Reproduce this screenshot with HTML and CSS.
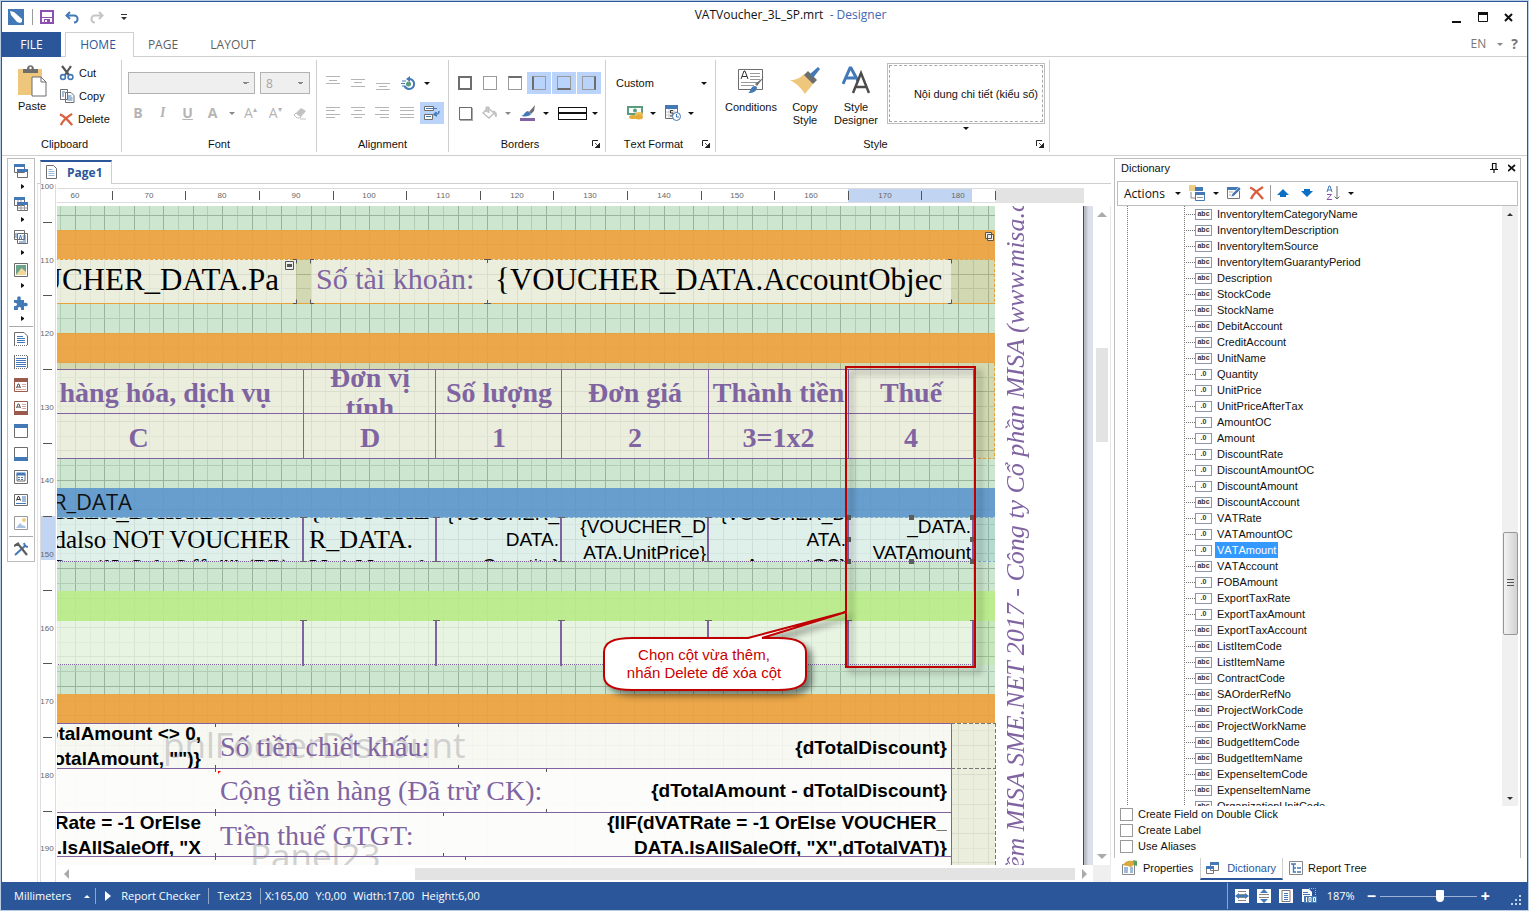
FILE: index.html
```html
<!DOCTYPE html>
<html lang="vi">
<head>
<meta charset="utf-8">
<title>VATVoucher_3L_SP.mrt - Designer</title>
<link rel="stylesheet" href="styles.css">
</head>
<body>
<svg class="defs" aria-hidden="true">
  <symbol id="launch" viewBox="0 0 8 8"><path d="M.5 6V.5H6" fill="none" stroke="#222"/><path d="M8 3v5H3zM3 3l3 3" fill="#222" stroke="#222" stroke-width=".8"/></symbol>
  <symbol id="cross" viewBox="0 0 16 16"><path d="M1 2.500C5 4 10 9 14 14M14 2C9 5 4 9 2 14" fill="none" stroke="#d9603f" stroke-width="2.400"/></symbol>
</svg>
<div class="window">
  <header class="titlebar">
    <div class="quick">
      <svg width="16" height="16" viewBox="0 0 16 16"><rect width="16" height="16" fill="#4379b6"/><path d="M2 2l4 1 8 7v3l-2 1-3-1-6-7z" fill="#fff"/></svg>
      <i class="vsep"></i>
      <button class="plain" aria-label="Save"><svg width="14" height="14" viewBox="0 0 14 14"><path d="M1 1h12v12H1z" fill="#fff" stroke="#8c50b0" stroke-width="2"/><path d="M2 7h10v1H2z" fill="#8c50b0"/><path d="M4 9h6v4H4z" fill="#8c50b0"/><path d="M5 10h2v2H5z" fill="#fff"/></svg></button>
      <button class="plain" aria-label="Undo"><svg width="14" height="13" viewBox="0 0 14 13"><path d="M5 1L1.500 4.500 5 8M2 4.500h7c5 0 4.500 7 0 7" fill="none" stroke="#4379b6" stroke-width="2"/></svg></button>
      <button class="plain" aria-label="Redo"><svg width="14" height="13" viewBox="0 0 14 13"><path d="M9 1l3.500 3.500L9 8M12 4.500H5c-5 0-4.500 7 0 7" fill="none" stroke="#c6c6c6" stroke-width="2"/></svg></button>
      <button class="plain more" aria-label="Customize toolbar"><svg width="6" height="6" viewBox="0 0 6 6"><path d="M0 0h6v1H0zM0 3h6L3 6z" fill="#333"/></svg></button>
    </div>
    <h1>VATVoucher_3L_SP.mrt&nbsp; <span>- Designer</span></h1>
    <div class="winbtns">
      <button class="plain" aria-label="Minimize"><svg width="10" height="11" viewBox="0 0 10 11"><path d="M0 9h9v2H0z" fill="#111"/></svg></button>
      <button class="plain" aria-label="Maximize"><svg width="10" height="10" viewBox="0 0 10 10"><path d="M.5 .5h9v9h-9z" fill="none" stroke="#111"/><path d="M0 0h10v3H0z" fill="#111"/></svg></button>
      <button class="plain" aria-label="Close"><svg width="9" height="9" viewBox="0 0 9 9"><path d="M1 1l7 7M8 1L1 8" stroke="#111" stroke-width="2"/></svg></button>
    </div>
  </header>

  <nav class="tabs">
    <button class="file">FILE</button>
    <button class="tab on">HOME</button>
    <button class="tab">PAGE</button>
    <button class="tab">LAYOUT</button>
    <div class="lang"><button class="plain">EN</button><i class="dd dim"></i><button class="plain help">?</button></div>
  </nav>

  <section class="ribbon">
    <div class="group g-clip">
      <div class="content clip">
        <button class="big"><svg width="30" height="32" viewBox="0 0 30 32"><path d="M1 4h24v26H1z" fill="#eec77d"/><path d="M6 4h4c0-5 7-5 7 0h4v4H6z" fill="#6d6d6d"/><circle cx="13.500" cy="3" r="1.200" fill="#fff"/><path d="M15 12h9l5 5v14H15z" fill="#fff" stroke="#6d6d6d"/><path d="M24 12v5h5" fill="none" stroke="#6d6d6d"/></svg>Paste</button>
        <div class="stack">
          <button class="row"><svg width="16" height="16" viewBox="0 0 16 16"><path d="M3 1l7 9M12 1L6 10" stroke="#555" stroke-width="2.200"/><circle cx="4" cy="12" r="2.400" fill="none" stroke="#4379b6" stroke-width="1.600"/><circle cx="11.500" cy="12" r="2.400" fill="none" stroke="#4379b6" stroke-width="1.600"/></svg>Cut</button>
          <button class="row"><svg width="16" height="16" viewBox="0 0 16 16"><path d="M1.500 1.500h7v10h-7zM6.500 4.500H12l3 3v7H6.500z" fill="#fff" stroke="#6d6d6d"/><path d="M3 4h3M3 6h2M3 8h2M8.500 8h4M8.500 10h5M8.500 12h5" stroke="#4379b6"/></svg>Copy</button>
          <button class="row"><svg width="15" height="15"><use href="#cross"/></svg>Delete</button>
        </div>
      </div>
      <div class="label">Clipboard</div>
    </div>

    <div class="group g-font">
      <div class="content">
        <div class="line combos"><select class="wide" aria-label="Font name" disabled><option></option></select><select class="size" aria-label="Font size" disabled><option>8</option></select></div>
        <div class="line">
          <button class="t b" disabled>B</button><button class="t it" disabled>I</button><button class="t u" disabled>U</button><button class="t b" disabled>A</button><i class="dd dim"></i>
          <button class="t" disabled>A<sup>▴</sup></button><button class="t" disabled>A<sup>▾</sup></button>
          <button class="t" disabled aria-label="Clear format"><svg width="14" height="14" viewBox="0 0 14 14"><path d="M1 9l7-7 5 3-6 7H4z" fill="#c2c2c2"/><path d="M1 9l2-2 5 4-1 1H4z" fill="#fff" stroke="#c2c2c2"/><path d="M7 13h6" stroke="#c2c2c2"/></svg></button>
        </div>
      </div>
      <div class="label">Font</div>
    </div>

    <div class="group g-align">
      <div class="content">
        <div class="line">
          <button class="t" disabled aria-label="Top"><svg width="14" height="14"><path d="M0 .5h14M3 4.500h8M0 7.500h14" stroke="#b5b5b5"/></svg></button>
          <button class="t" disabled aria-label="Middle"><svg width="14" height="14"><path d="M0 3.500h14M3 6.500h8M0 10.500h14" stroke="#b5b5b5"/></svg></button>
          <button class="t" disabled aria-label="Bottom"><svg width="14" height="14"><path d="M0 7.500h14M3 10.500h8M0 13.500h14" stroke="#b5b5b5"/></svg></button>
          <button class="t" aria-label="Rotate"><svg width="15" height="15" viewBox="0 0 15 15"><path d="M7 3c8-1 8 10 1 10-3 0-4-2-4.500-3" fill="none" stroke="#4379b6" stroke-width="2"/><path d="M9 0v6L5 3z" fill="#4379b6"/><circle cx="7.500" cy="8" r="2.500" fill="#5a9c7c"/><path d="M1 5h4M0 7.500h4M1 10h3" stroke="#4379b6"/></svg></button><i class="dd"></i>
        </div>
        <div class="line">
          <button class="t" disabled aria-label="Left"><svg width="14" height="12"><path d="M0 .5h14M0 3.500h9M0 7.500h14M0 10.500h9" stroke="#b5b5b5"/></svg></button>
          <button class="t" disabled aria-label="Center"><svg width="14" height="12"><path d="M0 .5h14M3 3.500h8M0 7.500h14M3 10.500h8" stroke="#b5b5b5"/></svg></button>
          <button class="t" disabled aria-label="Right"><svg width="14" height="12"><path d="M0 .5h14M5 3.500h9M0 7.500h14M5 10.500h9" stroke="#b5b5b5"/></svg></button>
          <button class="t" disabled aria-label="Justify"><svg width="14" height="12"><path d="M0 .5h14M0 3.500h14M0 7.500h14M0 10.500h14" stroke="#b5b5b5"/></svg></button>
          <button class="t sel" aria-label="Word wrap"><svg width="16" height="16" viewBox="0 0 16 16"><path d="M.5 1.500h9v4h-9zM.5 9.500h8v5h-8z" fill="#fff" stroke="#6d6d6d"/><path d="M2 3.500h11M2 11.500h5" stroke="#4379b6"/><path d="M15 6c0 3-1 3-4 3M12.500 7L10 9.500l3 1.500" fill="none" stroke="#4379b6" stroke-width="1.500"/></svg></button>
        </div>
      </div>
      <div class="label">Alignment</div>
    </div>

    <div class="group g-border">
      <div class="content">
        <div class="line">
          <button class="t" aria-label="All borders"><i class="box all"></i></button>
          <button class="t" aria-label="No border"><i class="box"></i></button>
          <button class="t" aria-label="Top border"><i class="box bt"></i></button>
          <button class="t sel" aria-label="Left border"><i class="box bl"></i></button>
          <button class="t sel" aria-label="Bottom border"><i class="box bb"></i></button>
          <button class="t sel" aria-label="Right border"><i class="box br"></i></button>
        </div>
        <div class="line">
          <button class="t" aria-label="Shadow"><i class="box shade"></i></button>
          <button class="t" disabled aria-label="Fill"><svg width="16" height="14" viewBox="0 0 16 14"><path d="M6 2l6 5-5 5-6-5z" fill="#fff" stroke="#bdbdbd" stroke-width="1.300"/><path d="M4 6V1h3v6M11 5c3 0 4 3 3 6-1-2-1-3-3-4" fill="#c8c8c8" stroke="#bdbdbd"/></svg></button><i class="dd dim"></i>
          <button class="t" aria-label="Border color"><svg width="16" height="16" viewBox="0 0 16 16"><path d="M15 0L9 7l2 2 3-3z" fill="#6d6d6d"/><path d="M1 11c3 0 3-4 7-5l3 3c-1 2-5 3-10 2z" fill="#4379b6"/><path d="M0 13h15v3H0z" fill="#8064a2"/></svg></button><i class="dd"></i>
          <button class="stroke" aria-label="Border style"></button><i class="dd"></i>
        </div>
      </div>
      <div class="label">Borders</div><svg class="launch"><use href="#launch"/></svg>
    </div>

    <div class="group g-fmt">
      <div class="content">
        <div class="line custom"><button class="pick"><span>Custom</span><i class="dd"></i></button></div>
        <div class="line fmts">
          <button class="t" aria-label="Currency"><svg width="16" height="16" viewBox="0 0 16 16"><path d="M1 2h14v7H1z" fill="#fff" stroke="#5a9c7c" stroke-width="2"/><circle cx="8" cy="5.500" r="2" fill="#5a9c7c"/><ellipse cx="6" cy="12" rx="4" ry="2" fill="#e5ac3c"/><ellipse cx="12" cy="9" rx="4" ry="2" fill="#edbd5a"/><ellipse cx="12" cy="12" rx="4" ry="2.500" fill="#e5ac3c"/></svg></button><i class="dd"></i>
          <button class="t" aria-label="Date"><svg width="16" height="16" viewBox="0 0 16 16"><path d="M.5 1.500h12v12H.5z" fill="#fff" stroke="#6d6d6d"/><path d="M0 0h13v4H0z" fill="#4379b6"/><path d="M1 7h11M1 10h11M4 4v9M9 4v9" stroke="#ccc"/><path d="M8 5.500H5.500V8H8v3H5" fill="none" stroke="#333"/><circle cx="11.500" cy="11.500" r="4" fill="#fff" stroke="#4379b6"/><path d="M11.500 9v3H14" fill="none" stroke="#4379b6"/></svg></button><i class="dd"></i>
        </div>
      </div>
      <div class="label">Text Format</div><svg class="launch"><use href="#launch"/></svg>
    </div>

    <div class="group g-style">
      <div class="content styles">
        <button class="big"><svg width="28" height="32" viewBox="0 0 28 32"><path d="M1.500 4.500h24v20h-24z" fill="#fff" stroke="#6d6d6d"/><path d="M4 14l3-8h1l3 8M5 11.500h5" fill="none" stroke="#333"/><path d="M13 8.500h10M13 11.500h10M13 14.500h10M4 17.500h18M4 20.500h13" stroke="#999"/><path d="M27 12l-7 9-2-2z" fill="#6d6d6d"/><path d="M11 28c3-1 2-7 7-7l2 1c0 4-3 6-9 6z" fill="#4379b6"/></svg>Conditions</button>
        <button class="big"><svg width="32" height="32" viewBox="0 0 32 32"><path d="M1 15c6 0 10-2 14-6l9 9c-1 3-5 7-8 11-4-6-8-10-15-14z" fill="#eec77d"/><path d="M15 10l4-4 9 9-4 4z" fill="#6d6d6d"/><path d="M21 9l8-7 2 2-7 9z" fill="#4379b6"/></svg>Copy<br>Style</button>
        <button class="big"><svg width="28" height="32" viewBox="0 0 28 32"><path d="M1 19L8 3h1l7 13M4 13h9" fill="none" stroke="#4379b6" stroke-width="3"/><path d="M11 28l8-20 8 20M14 22h10" fill="none" stroke="#4c4c4c" stroke-width="2.500"/></svg>Style<br>Designer</button>
        <div class="gallery"><button class="item"><span>Nội dung chi tiết (kiểu số)</span></button><i class="dd"></i></div>
      </div>
      <div class="label">Style</div><svg class="launch"><use href="#launch"/></svg>
    </div>
  </section>

  <main class="work">
    <aside class="toolbox">
      <button aria-label="Bands"><svg viewBox="0 0 14 14"><path d="M.5 .5h10v8H.5zM3.500 5.500h10v8h-10z" fill="#fff" stroke="#6d6d6d"/><path d="M0 0h11v3H0zM3 5h11v3H3z" fill="#4379b6"/></svg></button><i class="rt"></i>
      <button aria-label="Cross bands"><svg viewBox="0 0 14 14"><path d="M.5 .5h10v8H.5zM3.500 5.500h10v8h-10z" fill="#fff" stroke="#6d6d6d"/><path d="M0 0h11v3H0zM3 5h11v3H3z" fill="#4379b6"/><path d="M3.500 11h10M7 8v5M10.500 8v5M4 3v2M7 3v2" stroke="#999"/></svg></button><i class="rt"></i>
      <button aria-label="Components"><svg viewBox="0 0 14 14"><path d="M.5 .5h10v9H.5zM3.500 3.500h10v10h-10z" fill="#fff" stroke="#6d6d6d"/><path d="M5 10l1.500-5L8 10M2 3v5M8.500 6h3.500M9 8h3M9 10h3M5 12h7" fill="none" stroke="#4379b6"/></svg></button><i class="rt"></i>
      <button aria-label="Image"><svg viewBox="0 0 14 14"><path d="M.5 .5h13v13H.5z" fill="#fff" stroke="#6d6d6d"/><path d="M2 2h10v10H2z" fill="#6aa58b"/><path d="M2 12h10V9L7.500 5z" fill="#f4d798"/></svg></button><i class="rt"></i>
      <button aria-label="Plugins"><svg viewBox="0 0 14 14"><path d="M0 4h3.500c-2-5 5-5 3 0H10v3c5-2 5 5 0 3v4H7c1-4-4-4-3 0H0v-4c4 1 4-4 0-3z" fill="#4379b6"/></svg></button><i class="rt"></i>
      <hr>
      <button aria-label="Report title"><svg viewBox="0 0 14 14"><path d="M.5 13V.5H10l3.500 3.500v9" fill="#fff" stroke="#6d6d6d"/><path d="M0 13.500h14" stroke="#6d6d6d" stroke-dasharray="1 1"/><path d="M3 4.500h6M3 6.500h8M3 8.500h8M3 10.500h8" stroke="#4379b6"/></svg></button>
      <button aria-label="Data band"><svg viewBox="0 0 14 14"><path d="M.5 1v12M13.500 1v12" stroke="#6d6d6d"/><path d="M0 .5h14M0 13.500h14" stroke="#6d6d6d" stroke-dasharray="1 1"/><path d="M2 3.500h10M2 5.500h10M2 7.500h10M2 9.500h10M2 11.500h10" stroke="#4379b6"/></svg></button>
      <button aria-label="Header band"><svg viewBox="0 0 14 14"><path d="M.5 .5h13v13H.5z" fill="#fff" stroke="#9a5b4c"/><path d="M0 0h14v4H0z" fill="#9a5b4c"/><path d="M2.500 10L4 6h1l1.500 4M3 9h3" fill="none" stroke="#555"/><path d="M8 6.500h4M8 8.500h4M2 11.500h10" stroke="#d9a99e"/></svg></button>
      <button aria-label="Footer band"><svg viewBox="0 0 14 14"><path d="M.5 .5h13v13H.5z" fill="#fff" stroke="#9a5b4c"/><path d="M0 10h14v4H0z" fill="#9a5b4c"/><path d="M2.500 7L4 3h1l1.500 4M3 6h3" fill="none" stroke="#555"/><path d="M8 3.500h4M8 5.500h4M8 7.500h4" stroke="#d9a99e"/></svg></button>
      <button aria-label="Page header"><svg viewBox="0 0 14 14"><path d="M.5 .5h13v13H.5z" fill="#fff" stroke="#6d6d6d"/><path d="M0 0h14v4H0z" fill="#4379b6"/></svg></button>
      <button aria-label="Page footer"><svg viewBox="0 0 14 14"><path d="M.5 .5h13v13H.5z" fill="#fff" stroke="#6d6d6d"/><path d="M0 10h14v4H0z" fill="#4379b6"/></svg></button>
      <button aria-label="Panel"><svg viewBox="0 0 14 14"><path d="M.5 .5h13v13H.5zM3 4h8v7H3z" fill="#fff" stroke="#6d6d6d"/><path d="M2.500 2.500h9v3h-9z" fill="#4379b6"/><path d="M4 7.500h6M4 9.500h6" stroke="#4379b6" stroke-dasharray="2 1"/></svg></button>
      <button aria-label="Text"><svg viewBox="0 0 14 14"><path d="M.5 1.500h13v11H.5z" fill="#fff" stroke="#6d6d6d"/><path d="M2.500 7.500L4 3.500h1l1.500 4M3 6.500h3" fill="none" stroke="#333"/><path d="M8 4h4M8 6h4M8 8h4M2 10.500h10" stroke="#4379b6"/></svg></button>
      <button aria-label="Picture"><svg viewBox="0 0 14 14"><path d="M.5 .5h13v13H.5z" fill="#fff" stroke="#999"/><path d="M2 12l4-5 3 3 1-1 2 3z" fill="#a9c4e2"/><circle cx="10" cy="4" r="2" fill="#f0cd85"/></svg></button>
      <hr>
      <button aria-label="Tools"><svg viewBox="0 0 14 14"><path d="M1 13L12 3M10 1l1 3 3 1" fill="none" stroke="#4379b6" stroke-width="2"/><path d="M1 3h4l8 10M0 4l5-3" fill="none" stroke="#5d5d5d" stroke-width="2.200"/></svg></button>
    </aside>

    <section class="designer">
      <div class="pagetabs"><button class="pagetab"><svg width="11" height="14" viewBox="0 0 11 14"><path d="M.5 .5h7l3 3v10H.5z" fill="#fff" stroke="#6d6d6d"/><path d="M2.500 4.500h4M2.500 6.500h6M2.500 8.500h6M2.500 10.500h6" stroke="#9db8d8"/></svg>Page1</button></div>
      <div class="editor">
        <svg class="vruler" id="vruler"></svg>
        <div class="hruler"><svg id="hruler"></svg></div>
        <div class="canvas">
          <div class="sheet">
            <div class="area"></div>
            <svg class="grid" id="grid"></svg>
            <div class="band orange" style="top:230px;height:29px"></div>
            <div class="body otint" style="top:259px;height:45px"></div>
            <div class="band orange" style="top:333px;height:30px"></div>
            <div class="body otint" style="top:363px;height:96px"></div>
            <div class="band blue" style="top:488px;height:29px"><span>VOUCHER_DATA</span></div>
            <div class="body btint" style="top:517px;height:44px"></div>
            <div class="band lime" style="top:591px;height:30px"></div>
            <div class="body ltint" style="top:621px;height:44px"></div>
            <div class="band orange" style="top:694px;height:29px"></div>
            <div class="body otint" style="top:723px;height:150px"></div>
            <div class="body veil" style="top:723px;height:150px"></div>

            <div class="cell acc right" style="left:-100px;top:259px;width:396px;height:44px;padding-right:17px">{VOUCHER_DATA.Pa</div>
            <div class="cell acc violet" style="left:311px;top:259px;width:176px;height:44px">Số tài khoản:</div>
            <div class="cell acc" style="left:487px;top:259px;width:464px;height:44px;padding-left:8px">{VOUCHER_DATA.AccountObjec</div>

            <div class="cell head" style="left:-27px;top:369px;width:330px;height:45px">Tên hàng hóa, dịch vụ</div>
            <div class="cell head" style="left:303px;top:369px;width:133px;height:45px">Đơn vị<br>tính</div>
            <div class="cell head" style="left:436px;top:369px;width:125px;height:45px">Số lượng</div>
            <div class="cell head" style="left:561px;top:369px;width:147px;height:45px">Đơn giá</div>
            <div class="cell head" style="left:708px;top:369px;width:140px;height:45px">Thành tiền</div>
            <div class="cell head" style="left:848px;top:369px;width:125px;height:45px">Thuế</div>
            <div class="cell head" style="left:-27px;top:414px;width:330px;height:44px">C</div>
            <div class="cell head" style="left:303px;top:414px;width:133px;height:44px">D</div>
            <div class="cell head" style="left:436px;top:414px;width:125px;height:44px">1</div>
            <div class="cell head" style="left:561px;top:414px;width:147px;height:44px">2</div>
            <div class="cell head" style="left:708px;top:414px;width:140px;height:44px">3=1x2</div>
            <div class="cell head" style="left:848px;top:414px;width:125px;height:44px">4</div>

            <div class="cell det serif small right" style="left:-27px;top:518px;width:330px;height:43px;padding-right:13px"><div>VOUCHER_DATA.Discount<br>Andalso NOT VOUCHER<br>_DetailIsSaleOff, "" (PP)</div></div>
            <div class="cell det serif" style="left:303px;top:518px;width:133px;height:43px;padding-left:6px"><div>{VOUCHE<br>R_DATA.<br>UnitName}</div></div>
            <div class="cell det right" style="left:436px;top:518px;width:125px;height:43px"><div>{VOUCHER_<br>DATA.<br>Quantity}</div></div>
            <div class="cell det right" style="left:561px;top:518px;width:147px;height:43px"><div>{VOUCHER_D<br>ATA.UnitPrice}</div></div>
            <div class="cell det right" style="left:708px;top:518px;width:140px;height:43px"><div>{VOUCHER_D<br>ATA.<br>AmountOC}</div></div>
            <div class="cell det right" style="left:848px;top:518px;width:125px;height:43px"><div>{VOUCHER<br>_DATA.<br>VATAmount<br>}</div></div>
            <div class="cell" style="left:0;top:621px;width:973px;height:44px"></div>

            <div class="cell foot first" style="left:0;top:724px;width:951px;height:44px"></div>
            <div class="cell foot" style="left:0;top:769px;width:951px;height:43px"></div>
            <div class="cell foot" style="left:0;top:813px;width:951px;height:60px"></div>
            <div class="mark" style="left:163px;top:723px">pnlFooterDiscount</div>
            <div class="mark" style="left:250px;top:834px">Panel23</div>
            <div class="val" style="left:-150px;top:724px;width:351px;height:44px">dTotalAmount &lt;&gt; 0,<br>dTotalAmount, "")}</div>
            <div class="val" style="left:-150px;top:814px;width:351px;height:42px">dVATRate = -1 OrElse<br>DATA.IsAllSaleOff, "X</div>
            <div class="cap" style="left:220px;top:730px">Số tiền chiết khấu:</div>
            <div class="cap" style="left:220px;top:774px">Cộng tiền hàng (Đã trừ CK):</div>
            <div class="cap" style="left:220px;top:819px">Tiền thuế GTGT:</div>
            <div class="val" style="left:550px;top:725px;width:397px;height:44px">{dTotalDiscount}</div>
            <div class="val" style="left:550px;top:769px;width:397px;height:43px">{dTotalAmount - dTotalDiscount}</div>
            <div class="val" style="left:550px;top:814px;width:397px;height:42px">{IIF(dVATRate = -1 OrElse VOUCHER_<br>DATA.IsAllSaleOff, "X",dTotalVAT)}</div>
            <div class="side">Phần mềm MISA SME.NET 2017 - Công ty Cổ phần MISA (www.misa.com.vn)</div>

            <svg class="lines" width="1100" height="880">
              <g fill="none" stroke="#8064a2">
                <path d="M0 369.500h973M0 413.500h973M0 458.500h973M303.500 369v90M435.500 369v90M561.500 369v90M708.500 369v90M848.500 369v90M973.500 369v90"/>
                <path d="M0 723.500h951M0 768.500h951M0 812.500h951M0 856.500h951M951.500 723v150"/>
                <path d="M303 518v43M436 518v43M561 518v43M708 518v43M848 518v43M973 518v43M303 621v45M436 621v45M561 621v45M708 621v45M848 621v45M973 621v45" stroke-width="2"/>
                <path d="M0 561.500h973M0 664.500h973" stroke-dasharray="1 1"/>
              </g>
              <g fill="none" stroke="#e8a23c"><path d="M0 303.500h995"/><path d="M0 259.500h995M994.500 259v45M973 458.500h22M994.500 363v95" stroke-dasharray="3 2"/></g>
              <path d="M0 517.500h995M973 561.500h22" stroke="#7faad4" stroke-dasharray="3 2"/>
              <path d="M951 723.500h44M951 768.500h44M995.500 723v150" stroke="#777" stroke-dasharray="4 2" fill="none"/>
              <path d="M293 259.500h3.500v4M293 303.500h3.500v-4M314 259.500h-3.500v4M314 303.500h-3.500v-4M484 259.500h7M487.500 259v4M484 303.500h7M487.500 304v-4M948 259.500h3.500v4M948 303.500h3.500v-4" fill="none" stroke="#555"/>
              <path d="M300 517.500h7M433 517.500h7M558 517.500h7M705 517.500h7M300 561.500h7M433 561.500h7M558 561.500h7M705 561.500h7M300 620.500h7M433 620.500h7M558 620.500h7M705 620.500h7M845 620.500h7M970 620.500h6" stroke="#666"/>
              <path d="M215.500 724v3M215.500 765v7M215.500 809v7M215.500 853v7M458.500 724v3M458.500 765v3M546.500 769v3M546.500 809v3M443.500 813v3M443.500 853v3M465.500 857v3" stroke="#555"/>
              <path d="M218 771h3l-3 3z" fill="red"/>
              <path d="M846 515h5v5h-5zM909 515h5v5h-5zM970 515h5v5h-5zM846 537h5v5h-5zM970 537h5v5h-5zM846 559h5v5h-5zM909 559h5v5h-5zM970 559h5v5h-5z" fill="#5c5c5c"/>
              <path d="M285.500 261.500h8v8h-8z" fill="#eee" stroke="#555"/><path d="M287 264h5v3h-5z" fill="#555"/>
              <path d="M985.500 232.500h6v6h-6zM987.500 234.500h6v6h-6z" fill="#eee" stroke="#555"/>
              <path class="drop" d="M846 367h129v300H846z" fill="none" stroke="#c00000" stroke-width="2"/>
              <path class="drop" d="M632 638h116L846 612 762 638h16q28 0 28 14v24q0 14-28 14H632q-28 0-28-14v-24q0-14 28-14z" fill="#fff" stroke="#c00000" stroke-width="2"/>
            </svg>
            <div class="callout">Chọn cột vừa thêm,<br>nhấn Delete để xóa cột</div>
          </div>
        </div>
        <div class="vscroll"><i class="au"></i><i class="thumb"></i><i class="ad"></i></div>
        <div class="hscroll"><i class="al"></i><i class="thumb"></i><i class="ar"></i></div>
        <div class="corner"></div>
      </div>
    </section>

    <aside class="dock">
      <div class="panel">
        <div class="ptitle"><h2>Dictionary</h2>
          <button class="plain" aria-label="Pin"><svg width="8" height="10" viewBox="0 0 8 10"><path d="M2 .5h4V6M2.500 0v6M0 6.500h8M4 6v4" fill="none" stroke="#111" stroke-width="1.200"/></svg></button>
          <button class="plain" aria-label="Close panel"><svg width="8" height="8" viewBox="0 0 8 8"><path d="M0 1l7 6M7 1L0 7" stroke="#111" stroke-width="1.700"/></svg></button>
        </div>
        <div class="ptools">
          <button class="plain act">Actions<i class="dd"></i></button>
          <button class="plain" aria-label="New item"><svg width="16" height="16" viewBox="0 0 16 16"><path d="M0 0h7v6H0z" fill="#f0cd85"/><path d="M6 2h8v4H6z" fill="#4379b6"/><path d="M2 7v6h4" fill="none" stroke="#888"/><path d="M6.500 7.500h9v8h-9z" fill="#fff" stroke="#4379b6"/><path d="M6 7h10v3H6z" fill="#4379b6"/><path d="M8 12.500h6" stroke="#999"/></svg></button><i class="dd"></i>
          <button class="plain" aria-label="Edit"><svg width="14" height="14" viewBox="0 0 14 14"><path d="M.5 1.500h12v11H.5z" fill="#fff" stroke="#777"/><path d="M0 1h13v3H0z" fill="#4379b6"/><path d="M4 11l1-3 7-7 2 2-7 7z" fill="#4379b6" stroke="#fff" stroke-width=".6"/><path d="M2 6h4M2 9h2" stroke="#aaa"/></svg></button>
          <button class="plain" aria-label="Delete item"><svg width="16" height="16"><use href="#cross"/></svg></button>
          <i class="vsep"></i>
          <button class="plain" aria-label="Move up"><svg width="12" height="8" viewBox="0 0 12 8"><path d="M0 6l6-6 6 6H9v2H3V6z" fill="#0a70c4"/></svg></button>
          <button class="plain down" aria-label="Move down"><svg width="12" height="8" viewBox="0 0 12 8"><path d="M0 2h3V0h6v2h3L6 8z" fill="#0a70c4"/></svg></button>
          <button class="plain" aria-label="Sort"><svg width="14" height="16" viewBox="0 0 14 16"><path d="M1 7l2-6h1l2 6M1.500 5h4" fill="none" stroke="#4379b6"/><path d="M1 9.500h4.500L1 14.500h5" fill="none" stroke="#8c50b0"/><path d="M11 1v13M8.500 11.500L11 14l2.500-2.500" fill="none" stroke="#666"/></svg></button><i class="dd"></i>
        </div>
        <div class="treewrap">
          <ul class="tree">
            <li>InventoryItemCategoryName</li><li>InventoryItemDescription</li><li>InventoryItemSource</li><li>InventoryItemGuarantyPeriod</li><li>Description</li><li>StockCode</li><li>StockName</li><li>DebitAccount</li><li>CreditAccount</li><li>UnitName</li>
            <li class="n">Quantity</li><li class="n">UnitPrice</li><li class="n">UnitPriceAfterTax</li><li class="n">AmountOC</li><li class="n">Amount</li><li class="n">DiscountRate</li><li class="n">DiscountAmountOC</li><li class="n">DiscountAmount</li>
            <li>DiscountAccount</li><li class="n">VATRate</li><li class="n">VATAmountOC</li><li class="n on"><span>VATAmount</span></li><li>VATAccount</li><li class="n">FOBAmount</li><li class="n">ExportTaxRate</li><li class="n">ExportTaxAmount</li>
            <li>ExportTaxAccount</li><li>ListItemCode</li><li>ListItemName</li><li>ContractCode</li><li>SAOrderRefNo</li><li>ProjectWorkCode</li><li>ProjectWorkName</li><li>BudgetItemCode</li><li>BudgetItemName</li><li>ExpenseItemCode</li><li>ExpenseItemName</li><li>OrganizationUnitCode</li>
          </ul>
          <div class="tscroll"><i class="au"></i><i class="thumb"></i><i class="ad"></i></div>
        </div>
        <div class="opts">
          <label><input type="checkbox">Create Field on Double Click</label>
          <label><input type="checkbox">Create Label</label>
          <label><input type="checkbox">Use Aliases</label>
        </div>
      </div>
      <div class="dtabs">
        <button><svg width="17" height="16" viewBox="0 0 17 16"><path d="M1.500 4.500h12v10h-12z" fill="#fff" stroke="#888"/><path d="M3 8h4M9 8h3M3 10h4M9 10h3M3 12h4M9 12h3" stroke="#4379b6"/><path d="M2 5c2-4 6-5 10-4l2 3-4 3c-2 0-3-2-5-1z" fill="#d9a93e"/><path d="M12 0l4 1v5l-3-1z" fill="#5aa05a"/></svg>Properties</button>
        <button class="on"><svg width="14" height="14" viewBox="0 0 14 14"><path d="M4.500 1.500h8v8h-8zM.5 5.500h7v7h-7z" fill="#fff" stroke="#777"/><path d="M4 1h9v3H4zM0 5h8v3H0z" fill="#4379b6"/></svg>Dictionary</button>
        <button><svg width="14" height="14" viewBox="0 0 14 14"><path d="M.5 .5h13v13H.5z" fill="#fff" stroke="#888"/><path d="M2 3h5M4.500 3v8H7M4.500 7H7M8 7h4M8 11h4" fill="none" stroke="#4379b6" stroke-width="1.400"/></svg>Report Tree</button>
      </div>
    </aside>
  </main>

  <footer class="status">
    <button class="plain unit">Millimeters<i class="up"></i></button>
    <button class="plain chk"><i class="play"></i>Report Checker</button>
    <span class="cellname">Text23</span>
    <span class="pos"><b>X:165,00</b><b>Y:0,00</b><b>Width:17,00</b><b>Height:6,00</b></span>
    <div class="zoom">
      <button class="plain" aria-label="Page width"><svg width="14" height="14" viewBox="0 0 14 14"><path d="M0 0h14v14H0z" fill="#fff"/><path d="M3 2.500h8M3 11.500h8M4 5.500h6M4 8.500h6" stroke="#888"/><path d="M0 7l4-3v2h6V4l4 3-4 3V8H4v2z" fill="#4379b6"/></svg></button>
      <button class="plain" aria-label="Whole page"><svg width="14" height="14" viewBox="0 0 14 14"><path d="M0 0h14v14H0z" fill="#fff"/><path d="M2 5.500h10M2 8.500h10" stroke="#888"/><path d="M7 0l4 4H3zM7 14l4-4H3z" fill="#4379b6"/></svg></button>
      <button class="plain" aria-label="One page"><svg width="14" height="14" viewBox="0 0 14 14"><path d="M0 0h14v14H0z" fill="#fff"/><path d="M3 1.500h8v11H3z" fill="none" stroke="#777"/><path d="M5 4.500h4M5 6.500h4M5 8.500h4M5 10.500h4" stroke="#4379b6"/></svg></button>
      <button class="plain" aria-label="Actual size"><svg width="16" height="16" viewBox="0 0 16 16"><path d="M1 1h7l3 3v10H1z" fill="#fff"/><path d="M8 .5h6.500V7" fill="none" stroke="#c9b48a" stroke-dasharray="1 1"/><path d="M2 4.500h5M2 6.500h7" stroke="#4379b6"/><path d="M3 8h13v7H3z" fill="#4379b6"/><path d="M5.500 9v5M8 9.500h2v4H8zM12.500 9.500h2v4h-2z" fill="none" stroke="#fff"/></svg></button>
      <label for="zoom">187%</label>
      <span class="sign">−</span>
      <input id="zoom" type="range" min="0" max="100" value="63">
      <span class="sign">+</span>
      <svg class="grip" width="12" height="12" viewBox="0 0 12 12"><path d="M8 0h2v2H8zM4 4h2v2H4zM8 4h2v2H8zM0 8h2v2H0zM4 8h2v2H4zM8 8h2v2H8z" fill="#c5d3e8"/></svg>
    </div>
  </footer>
</div>
<script src="rulers.js"></script>
</body>
</html>
```
FILE: styles.css
```css
* { box-sizing: border-box; }
html, body { height: 100%; }
body { margin: 0; padding: 1px; background: #b9cde3; font: 11px/14px "Liberation Sans", Arial, sans-serif; color: #111; font-kerning: none; overflow: hidden; }
button { font: inherit; color: inherit; background: none; border: 0; padding: 0; margin: 0; }
h1, h2 { margin: 0; font: inherit; }
i { display: block; flex: none; }
svg { flex: none; display: block; }
.defs { position: absolute; width: 0; height: 0; }
.plain { display: flex; align-items: center; }
.dd { width: 0; height: 0; border: 3px solid transparent; border-top-color: #111; border-bottom: 0; }
.dd.dim { border-top-color: #888; }
.vsep { width: 1px; height: 16px; background: #9b9b9b; }

.window { height: 100%; display: flex; flex-direction: column; background: #fff; border: 1px solid #2b579a; border-bottom: 0; }

.titlebar { height: 30px; flex: none; display: flex; align-items: center; padding: 0 14px 0 6px; font-family: "Open Sans", sans-serif; font-size: 12px; }
.titlebar h1 { flex: 1; text-align: center; padding-bottom: 4px; }
.titlebar h1 span { color: #3f68b0; }
.quick { display: flex; align-items: center; gap: 8px; width: 476px; }
.quick .vsep { margin-right: -1px; }
.quick .plain + .plain { margin-left: 3px; }
.quick .more { padding-left: 6px; }
.winbtns { display: flex; align-items: center; justify-content: flex-end; gap: 16px; width: 416px; }

.tabs { height: 25px; flex: none; display: flex; border-bottom: 1px solid #cfcfcf; font: 12px/26px "Open Sans", sans-serif; color: #5f5f5f; }
.file { width: 59px; background: #2b579a; color: #fff; height: 25px; }
.tab { width: 66px; height: 24px; }
.tab.on { width: 69px; margin-left: 4px; margin-right: -4px; padding-right: 3px; height: 25px; background: #fff; color: #2b579a; border: 1px solid #cfcfcf; border-bottom: 0; line-height: 24px; }
.tab:nth-child(4) { width: 74px; }
.lang { margin-left: auto; display: flex; align-items: center; gap: 11px; padding-right: 9px; color: #777; }
.help { font-weight: 700; }
.lang .help { margin-left: -3px; font-size: 14px; }

.ribbon { height: 99px; flex: none; display: flex; border-bottom: 1px solid #cfcfcf; padding: 3px 0; }
.group { position: relative; border-right: 1px solid #cfcfcf; display: flex; flex-direction: column; }
.g-clip { width: 120px; } .g-font { width: 195px; } .g-align { width: 132px; }
.g-border { width: 157px; } .g-fmt { width: 110px; } .g-style { width: 334px; }
.content { flex: 1; padding: 12px 4px 0; display: flex; flex-direction: column; gap: 8px; }
.label { height: 15px; text-align: center; padding: 0 8px; }
.g-clip .label { padding: 0 2px 0 8px; }
.g-border .label, .g-style .label, .g-fmt .label { padding-right: 22px; }
.launch { position: absolute; right: 5px; bottom: 4px; width: 8px; height: 8px; }
.line { display: flex; align-items: center; height: 22px; gap: 1px; }
.line .dd { margin: 0 3px; }
.t { width: 24px; height: 22px; display: flex; align-items: center; justify-content: center; font: 14px/22px "Open Sans", sans-serif; color: #b5b5b5; }
.t.b, .t.u { font-weight: 700; }
.t.u { text-decoration: underline; }
.t.it { font: italic bold 14px/22px "Liberation Serif", serif; }
.t sup { font-size: 8px; line-height: 8px; margin-top: -8px; }
.sel { background: #b9d3fb; }
.g-font .line .dd { margin: 0 2px 0 4px; }

.clip { flex-direction: row; padding: 5px 0 0 15px; gap: 12px; }
.big { display: flex; flex-direction: column; align-items: center; justify-content: flex-start; line-height: 13px; gap: 3px; }
.stack { display: flex; flex-direction: column; gap: 7px; }
.row { display: flex; align-items: center; gap: 4px; height: 16px; }
.combos { gap: 5px; padding-left: 2px; }
select { height: 22px; appearance: none; border: 1px solid #b2b2b2; border-radius: 0; color: #a5a5a5; opacity: 1; font: 12px "Open Sans", sans-serif; padding: 0 5px; background: linear-gradient(135deg, #888 50%, transparent 50%) no-repeat right 5px center / 3px 3px, linear-gradient(225deg, #888 50%, transparent 50%) no-repeat right 8px center / 3px 3px, #efefef; }
.wide { width: 127px; } .size { width: 50px; }
.box { width: 14px; height: 14px; border: 1px solid #9a9a9a; }
.box.all { border: 2px solid #6d6d6d; }
.bt { border-top: 2px solid #6d6d6d; } .bl { border-left: 2px solid #6d6d6d; }
.bb { border-bottom: 2px solid #6d6d6d; } .br { border-right: 2px solid #6d6d6d; }
.shade { width: 13px; height: 13px; border-color: #6d6d6d; box-shadow: 1px 1px #aaa; }
.g-border .line .dd { margin: 0 4px 0 2px; }
.stroke { width: 29px; height: 13px; border: 1px solid #111; background: linear-gradient(#111, #111) center / 27px 2px no-repeat #fff; margin-left: 4px; }
.g-border .stroke + .dd { margin: 0 0 0 4px; }
.pick { flex: 1; display: flex; align-items: center; justify-content: space-between; padding: 0 1px 0 6px; }
.fmts { padding-left: 13px; }
.fmts .t + .dd { margin: 0 4px 0 2px; }

.styles { flex-direction: row; padding: 5px 4px 0 10px; gap: 0; }
.styles .big { gap: 4px; }
.styles .big:nth-child(1) { width: 50px; }
.styles .big:nth-child(2) { width: 58px; }
.styles .big:nth-child(3) { width: 44px; }
.gallery { margin-left: auto; width: 158px; margin-top: -2px; display: flex; flex-direction: column; align-items: center; gap: 3px; }
.item { width: 158px; height: 61px; border: 1px solid #bdbdbd; padding: 1px; }
.item span { display: flex; height: 100%; border: 1px dashed #a9a9a9; align-items: center; justify-content: flex-end; padding-right: 4px; white-space: nowrap; }

.work { flex: 1; min-height: 0; display: flex; align-items: stretch; }
.toolbox { width: 28px; margin: 2px 2px 0 5px; border: 1px solid #bdbdbd; align-self: flex-start; display: flex; flex-direction: column; align-items: center; padding: 5px 0; }
.toolbox button { width: 14px; height: 14px; margin-bottom: 9px; }
.toolbox button:last-child { margin-bottom: 0; }
.toolbox svg { width: 14px; height: 14px; }
.toolbox button:has(+ .rt) { margin-bottom: 6px; }
.rt { width: 0; height: 5px; border: solid transparent; border-width: 2px 0 2px 3px; border-left-color: #111; margin: 0 0 8px 3px; }
.toolbox hr { width: 24px; height: 1px; border: 0; background: #a9a9a9; margin: -3px 0 5px; }

.designer { flex: 1; min-width: 0; display: flex; flex-direction: column; }
.pagetabs { height: 28px; flex: none; padding: 4px 0 0 3px; border-bottom: 1px solid #cfcfcf; }
.pagetab { width: 72px; height: 24px; display: flex; align-items: center; gap: 10px; padding: 0 0 2px 5px; background: #fff; border: 1px solid #cfcfcf; border-top: 2px solid #2b579a; border-bottom: 0; color: #2b579a; font: bold 12px "Open Sans", sans-serif; }
.editor { flex: 1; min-height: 0; display: grid; grid-template-columns: 19px 1fr 18px; grid-template-rows: 22px 1fr 17px; border-left: 1px solid #e3e3e3; }
.vruler { grid-row: 1 / 4; width: 16px; height: 100%; margin-left: 2px; border: solid #dcdcdc; border-width: 0 1px; }
.hruler { grid-column: 2 / 4; padding: 4px 0 2px; }
.hruler svg { display: block; width: 100%; height: 16px; }
.canvas { grid-column: 2; grid-row: 2; position: relative; overflow: hidden; background: #dbe0ea; }
.vscroll { grid-column: 3; grid-row: 2; display: flex; flex-direction: column; align-items: center; padding: 6px 0; border-right: 1px solid #e8e8e8; }
.vscroll .thumb { width: 12px; height: 94px; background: #e3e3e3; margin: 131px 0 auto; }
.hscroll { grid-column: 2; grid-row: 3; display: flex; align-items: center; padding: 0 6px 0 7px; }
.hscroll .thumb { height: 12px; flex: 0 1 660px; background: #e3e3e3; margin-left: auto; margin-right: 7px; }
.corner { background: #efefef; }
.au, .ad, .al, .ar { width: 0; height: 0; border: 5px solid transparent; }
.au { border-bottom-color: #aaa; border-top: 0; } .ad { border-top-color: #aaa; border-bottom: 0; }
.al { border-right-color: #aaa; border-left: 0; } .ar { border-left-color: #aaa; border-right: 0; }

/* The sheet is scrolled under the canvas; children use sheet coordinates. */
.sheet { position: absolute; left: -57px; top: -206px; width: 1084px; height: 900px; background: #fff; border-right: 1px solid #4a4a4a; box-shadow: 3px 0 2px #b5bac4; }
.sheet > * { position: absolute; }
.area { left: 0; top: 0; width: 995px; height: 900px; background: #cde6cf; }
.grid { left: 0; top: 0; width: 995px; height: 900px; }
.band, .body { left: 0; width: 995px; }
.orange { background: rgba(238, 160, 58, .9); }
.blue { background: rgba(93, 150, 204, .9); }
.lime { background: rgba(186, 236, 135, .9); }
.otint { background: rgba(230, 165, 67, .2); }
.btint { background: rgba(93, 170, 214, .2); }
.ltint { background: rgba(186, 236, 135, .25); }
.veil { background: rgba(255, 255, 255, .56); }
.band span { position: absolute; right: 863px; font: 22px/27px "Open Sans", sans-serif; }
.cell { background: rgba(255, 255, 255, .56); overflow: hidden; white-space: nowrap; }
.head, .cap, .side { color: #8064a2; }
.acc { font: 31px/33px "Liberation Serif", serif; padding: 4px 5px 0; color: #000; }
.acc.violet { color: #8064a2; font-size: 30px; padding-top: 3px; }
.right { text-align: right; }
.head { display: flex; align-items: center; justify-content: center; text-align: center; font: bold 28px/30px "Liberation Serif", serif; padding: 3px 0 0 1px; }
.det { display: flex; align-items: center; font: 19px/26px "Liberation Sans", sans-serif; color: #000; padding: 0 2px; }
.det.right { justify-content: flex-end; }
.det.serif { font: 26px/29px "Liberation Serif", serif; }
.det.small { font-size: 25px; }
.foot { background: rgba(255, 255, 255, .85); }
.foot.first { background: rgba(255, 255, 255, .6); }
.mark { font: 35px/44px "Open Sans", sans-serif; color: #d0d0d0; }
.cap { font: 28px/33px "Liberation Serif", serif; white-space: nowrap; }
.val { display: grid; align-content: center; text-align: right; font: bold 19px/25px "Liberation Sans", sans-serif; color: #000; overflow: hidden; white-space: nowrap; }
.side { left: 1001px; bottom: -48px; writing-mode: vertical-rl; transform: rotate(180deg); font: italic 26px/30px "Liberation Serif", serif; white-space: nowrap; }
.lines { left: 0; top: 0; }
.drop { filter: drop-shadow(5px 5px 3px rgba(0, 0, 0, .45)); }
.callout { left: 604px; top: 646px; width: 200px; text-align: center; color: #c80000; font: 15px/18px "Liberation Sans", sans-serif; }

.dock { width: 407px; flex: none; margin: 2px 6px 2px 3px; display: flex; flex-direction: column; }
.panel { flex: 1; min-height: 0; border: 1px solid #bdbdbd; border-bottom: 0; display: flex; flex-direction: column; padding: 0 2px; }
.ptitle { height: 22px; flex: none; display: flex; align-items: center; gap: 10px; padding: 0 2px 4px 4px; }
.ptitle h2 { flex: 1; }
.ptools { height: 25px; flex: none; border: 1px solid #bdbdbd; display: flex; align-items: center; padding: 0 0 1px 6px; gap: 8px; }
.act { gap: 10px; font: 12px "Open Sans", sans-serif; }
.ptools .vsep { margin: 0 -2px 0 -3px; }
.ptools .down { margin: 0 5px 0 4px; }
.treewrap { flex: 1; min-height: 0; display: flex; }
.tree { flex: 1; margin: 0; padding: 0 0 0 10px; list-style: none; overflow: hidden; background: linear-gradient(#777 50%, transparent 50%) 10px 0 / 1px 2px repeat-y, linear-gradient(#777 50%, transparent 50%) 67px 0 / 1px 2px repeat-y; }
.tree li { height: 16px; line-height: 16px; display: flex; align-items: center; margin-left: 57px; background: repeating-linear-gradient(90deg, #777 0 1px, transparent 1px 2px) 0 8px / 11px 1px no-repeat; }
.tree li::before { content: "abc"; width: 15px; height: 9px; margin: 0 5px 0 11px; border: 1px solid #8a97ad; background: #fff; font: bold 7px/7px "Liberation Sans", sans-serif; text-align: center; color: #333; flex: none; }
.tree li.n::before { content: ".0"; }
.tree span { background: #3399ff; color: #fff; margin-left: -2px; padding: 0 2px; }
.tscroll { width: 16px; background: #f0f0f0; display: flex; flex-direction: column; align-items: center; padding: 7px 0 6px; }
.tscroll .thumb { width: 15px; height: 103px; border: 1px solid #979797; border-radius: 2px; background: linear-gradient(#555, #555) center 46px / 7px 1px no-repeat, linear-gradient(#555, #555) center 49px / 7px 1px no-repeat, linear-gradient(#555, #555) center 52px / 7px 1px no-repeat, linear-gradient(90deg, #f3f3f3, #d2d2d2); margin: auto 0 162px; }
.tscroll .au, .tscroll .ad { border-width: 3px; }
.tscroll .au { border-top: 0; border-bottom-color: #333; } .tscroll .ad { border-bottom: 0; border-top-color: #333; }
.opts { padding: 0 0 4px 3px; flex: none; }
.opts label { display: flex; align-items: center; gap: 5px; height: 16px; }
.opts input { appearance: none; width: 13px; height: 13px; margin: 0; border: 1px solid #9a9a9a; background: #fff; }
.dtabs { height: 22px; flex: none; display: flex; padding-left: 7px; }
.dtabs button { display: flex; align-items: center; gap: 5px; padding-right: 7px; border-bottom: 2px solid transparent; }
.dtabs .on { color: #2b579a; border: 1px solid #cfcfcf; border-top: 0; border-bottom: 2px solid #2b579a; padding: 0 6px 0 5px; gap: 7px; margin-right: 6px; }

.status { height: 28px; flex: none; background: #2b579a; color: #fff; display: flex; align-items: center; font: 11px/16px "Open Sans", sans-serif; padding-left: 13px; margin: 0 -1px; }
.status b { font-weight: 400; }
.unit { gap: 13px; padding-right: 5px; border-right: 1px solid #8fa6c9; }
.up { border: 3px solid transparent; border-top: 0; border-bottom-color: #fff; }
.chk { gap: 10px; padding: 0 8px 0 9px; border-right: 1px solid #8fa6c9; }
.play { border: 5px solid transparent; border-left: 6px solid #fff; border-right: 0; }
.cellname { padding: 0 8px; border-right: 1px solid #8fa6c9; }
.pos { display: flex; gap: 7px; padding-left: 4px; }
.zoom { margin-left: auto; height: 26px; display: flex; align-items: center; gap: 8px; padding: 0 5px 0 7px; border-left: 1px solid #8fa6c9; }
.zoom label { margin: 0 4px 0 2px; }
.sign { font: bold 16px/16px "Open Sans", sans-serif; }
.zoom input { appearance: none; width: 97px; height: 16px; margin: 0 -4px; background: linear-gradient(#9db3d3, #9db3d3) center / 100% 1px no-repeat; }
.zoom input::-webkit-slider-thumb { appearance: none; width: 8px; height: 12px; background: #fff; border-radius: 1px 1px 4px 4px; }
.grip { margin: 10px 0 0 13px; }
```
FILE: rulers.js
```js
const NS = 'http://www.w3.org/2000/svg';
const add = (parent, tag, attrs, text) => {
  const el = document.createElementNS(NS, tag);
  for (const k in attrs) el.setAttribute(k, attrs[k]);
  if (text !== undefined) el.textContent = text;
  parent.appendChild(el);
};
const MM = 7.36;
const grid = document.getElementById('grid');
const lines = (start, step, max, vertical) => {
  let major = '', minor = '';
  for (let i = 0; start + i * step < max; i++) {
    const p = Math.round(start + i * step) + 0.5;
    const d = vertical ? `M${p} 206V900` : `M57 ${p}H995`;
    if (i % 2) minor += d; else major += d;
  }
  add(grid, 'path', { d: minor, stroke: '#b2cdb5' });
  add(grid, 'path', { d: major, stroke: '#99b49d' });
};
lines(16.1, MM * 2, 995, true);
lines(214.8, MM * 2, 900, false);

const label = { 'font-size': 8, 'font-family': 'Liberation Sans, sans-serif', fill: '#666', 'text-anchor': 'middle' };
const h = document.getElementById('hruler');
add(h, 'path', { d: 'M0 .5H1027M0 14.500H1027', stroke: '#dcdcdc' });
add(h, 'rect', { x: 791, y: 1, width: 124, height: 13, fill: '#c1d5f2' });
add(h, 'rect', { x: 938, y: 0, width: 89, height: 15, fill: '#e3e3e3' });
for (let mm = 60; mm <= 185; mm += 5) {
  const x = Math.round(18 + (mm - 60) * MM);
  if (mm % 10) add(h, 'path', { d: `M${x + 0.5} 3v9`, stroke: '#555' });
  else add(h, 'text', { ...label, x, y: 10 }, mm);
}
const v = document.getElementById('vruler');
add(v, 'rect', { x: 0, y: 332, width: 14, height: 44, fill: '#c1d5f2' });
for (let mm = 100; mm <= 190; mm += 5) {
  const y = Math.round(1 + (mm - 100) * MM);
  if (mm % 10) add(v, 'path', { d: `M2 ${y + 0.5}h9`, stroke: '#555' });
  else add(v, 'text', { ...label, x: 6, y: y + 4 }, mm);
}
```
